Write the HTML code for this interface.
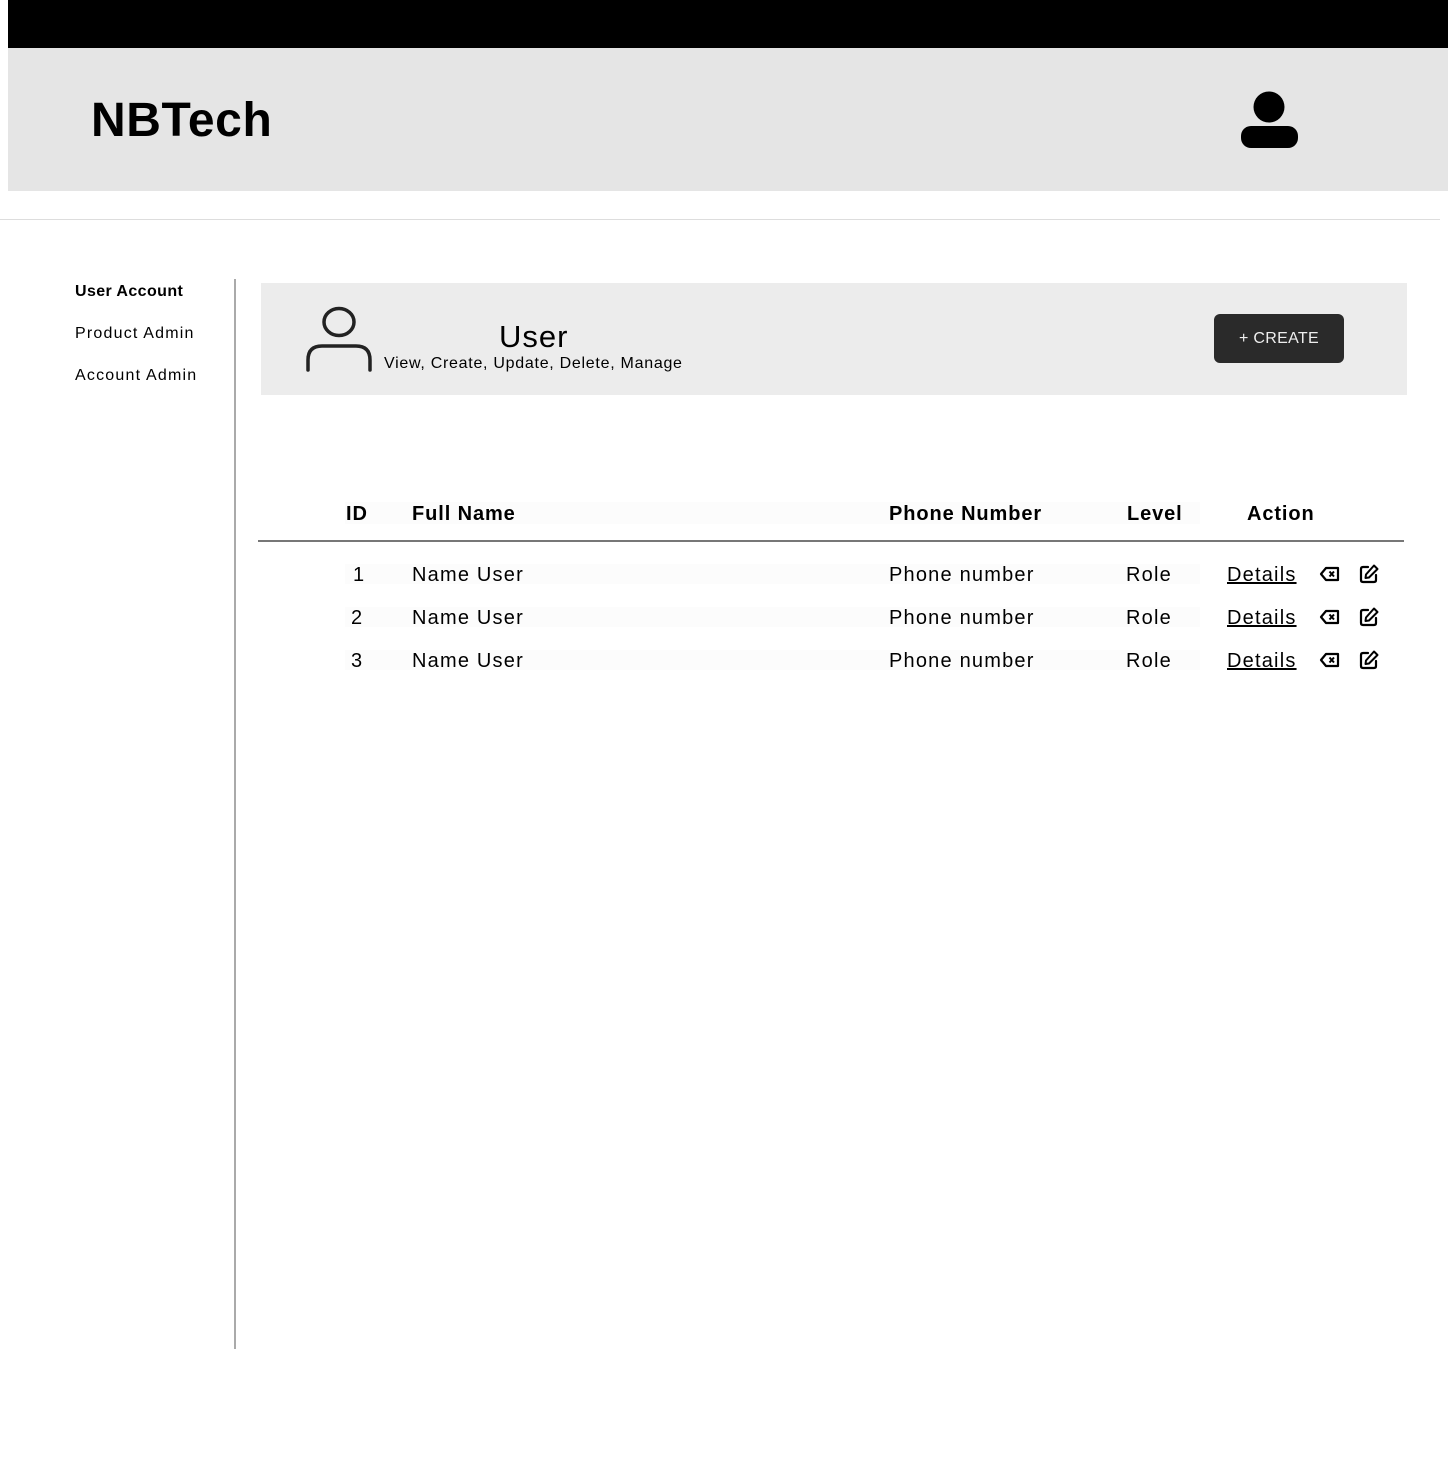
<!DOCTYPE html>
<html><head><meta charset="utf-8"><style>
*{margin:0;padding:0;box-sizing:border-box}
body{width:1448px;height:1466px;background:#fff;position:relative;font-family:"Liberation Sans",sans-serif;color:#000;overflow:hidden}
.a{position:absolute;white-space:nowrap}
.row{position:absolute;left:345px;width:855px;height:20px;background:#fcfcfc}
.c{position:absolute;font-size:20px;line-height:24px;letter-spacing:1.2px}
.h{position:absolute;font-size:20px;font-weight:bold;line-height:24px;letter-spacing:0.9px}
.s{font-size:16px;letter-spacing:1.2px}
</style></head><body>
<div class="a" style="left:8px;top:0;width:1440px;height:48px;background:#000"></div>
<div class="a" style="left:8px;top:48px;width:1440px;height:143px;background:#e5e5e5"></div>
<div class="a" style="left:91px;top:93px;font-size:48px;font-weight:bold;line-height:56px;letter-spacing:0.6px">NBTech</div>
<svg class="a" style="left:1238px;top:88px" width="64" height="64" viewBox="0 0 64 64">
<circle cx="31" cy="19" r="15.5" fill="#000"/>
<rect x="3" y="38" width="57" height="22" rx="10" fill="#000"/>
</svg>
<div class="a" style="left:0;top:219px;width:1440px;height:1px;background:#ddd"></div>

<div class="a s" style="left:75px;top:283px;font-weight:bold;letter-spacing:0.4px">User Account</div>
<div class="a s" style="left:75px;top:325px">Product Admin</div>
<div class="a s" style="left:75px;top:367px">Account Admin</div>
<div class="a" style="left:234px;top:279px;width:2px;height:1070px;background:#aaa"></div>

<div class="a" style="left:261px;top:283px;width:1146px;height:112px;background:#ececec"></div>
<svg class="a" style="left:300px;top:302px" width="80" height="75" viewBox="0 0 80 75">
<ellipse cx="39" cy="20" rx="15" ry="13.5" fill="none" stroke="#222" stroke-width="3.5"/>
<path d="M8 68 V58 Q8 44 22 44 H56 Q70 44 70 58 V68" fill="none" stroke="#222" stroke-width="3.5" stroke-linecap="round"/>
</svg>
<div class="a" style="left:499px;top:319px;font-size:31px;line-height:36px;letter-spacing:1px">User</div>
<div class="a" style="left:384px;top:354px;font-size:16px;line-height:20px;letter-spacing:0.72px">View, Create, Update, Delete, Manage</div>
<div class="a" style="left:1214px;top:314px;width:130px;height:49px;background:#2a2a2a;border-radius:6px;color:#eee;font-size:16px;line-height:49px;text-align:center;letter-spacing:0.3px">+ CREATE</div>

<div class="a" style="left:345px;top:502px;width:855px;height:22px;background:#fcfcfc"></div>
<div class="h" style="left:346px;top:502px">ID</div>
<div class="h" style="left:412px;top:502px">Full Name</div>
<div class="h" style="left:889px;top:502px">Phone Number</div>
<div class="h" style="left:1127px;top:502px">Level</div>
<div class="h" style="left:1247px;top:502px">Action</div>
<div class="a" style="left:258px;top:540px;width:1146px;height:2px;background:#777"></div>

<div class="row" style="top:564px"></div>
<div class="row" style="top:607px"></div>
<div class="row" style="top:650px"></div>

<div class="c" style="left:353px;top:563px">1</div>
<div class="c" style="left:351px;top:606px">2</div>
<div class="c" style="left:351px;top:649px">3</div>
<div class="c" style="left:412px;top:563px">Name User</div>
<div class="c" style="left:412px;top:606px">Name User</div>
<div class="c" style="left:412px;top:649px">Name User</div>
<div class="c" style="left:889px;top:563px">Phone number</div>
<div class="c" style="left:889px;top:606px">Phone number</div>
<div class="c" style="left:889px;top:649px">Phone number</div>
<div class="c" style="left:1126px;top:563px">Role</div>
<div class="c" style="left:1126px;top:606px">Role</div>
<div class="c" style="left:1126px;top:649px">Role</div>
<div class="c" style="left:1227px;top:563px;text-decoration:underline">Details</div>
<div class="c" style="left:1227px;top:606px;text-decoration:underline">Details</div>
<div class="c" style="left:1227px;top:649px;text-decoration:underline">Details</div>

<svg width="0" height="0" style="position:absolute"><defs>
<g id="del"><path d="M7 3 H19 V15 H7 L2 9 Z" fill="none" stroke="#000" stroke-width="2.2" stroke-linejoin="round"/><path d="M10.5 6.5 L15 11.5 M15 6.5 L10.5 11.5" stroke="#000" stroke-width="2"/></g>
<g id="ed"><path d="M9 3 H4 Q2 3 2 5 V16 Q2 18 4 18 H15 Q17 18 17 16 V11" fill="none" stroke="#000" stroke-width="2.2" stroke-linecap="round"/><path d="M15 1.5 L18.5 5 L10 13.5 L6.5 14 L7 10.5 Z" fill="none" stroke="#000" stroke-width="2" stroke-linejoin="round"/></g>
</defs></svg>
<svg class="a" style="left:1319px;top:565px" width="22" height="18"><use href="#del"/></svg>
<svg class="a" style="left:1319px;top:608px" width="22" height="18"><use href="#del"/></svg>
<svg class="a" style="left:1319px;top:651px" width="22" height="18"><use href="#del"/></svg>
<svg class="a" style="left:1359px;top:564px" width="21" height="20"><use href="#ed"/></svg>
<svg class="a" style="left:1359px;top:607px" width="21" height="20"><use href="#ed"/></svg>
<svg class="a" style="left:1359px;top:650px" width="21" height="20"><use href="#ed"/></svg>
</body></html>
